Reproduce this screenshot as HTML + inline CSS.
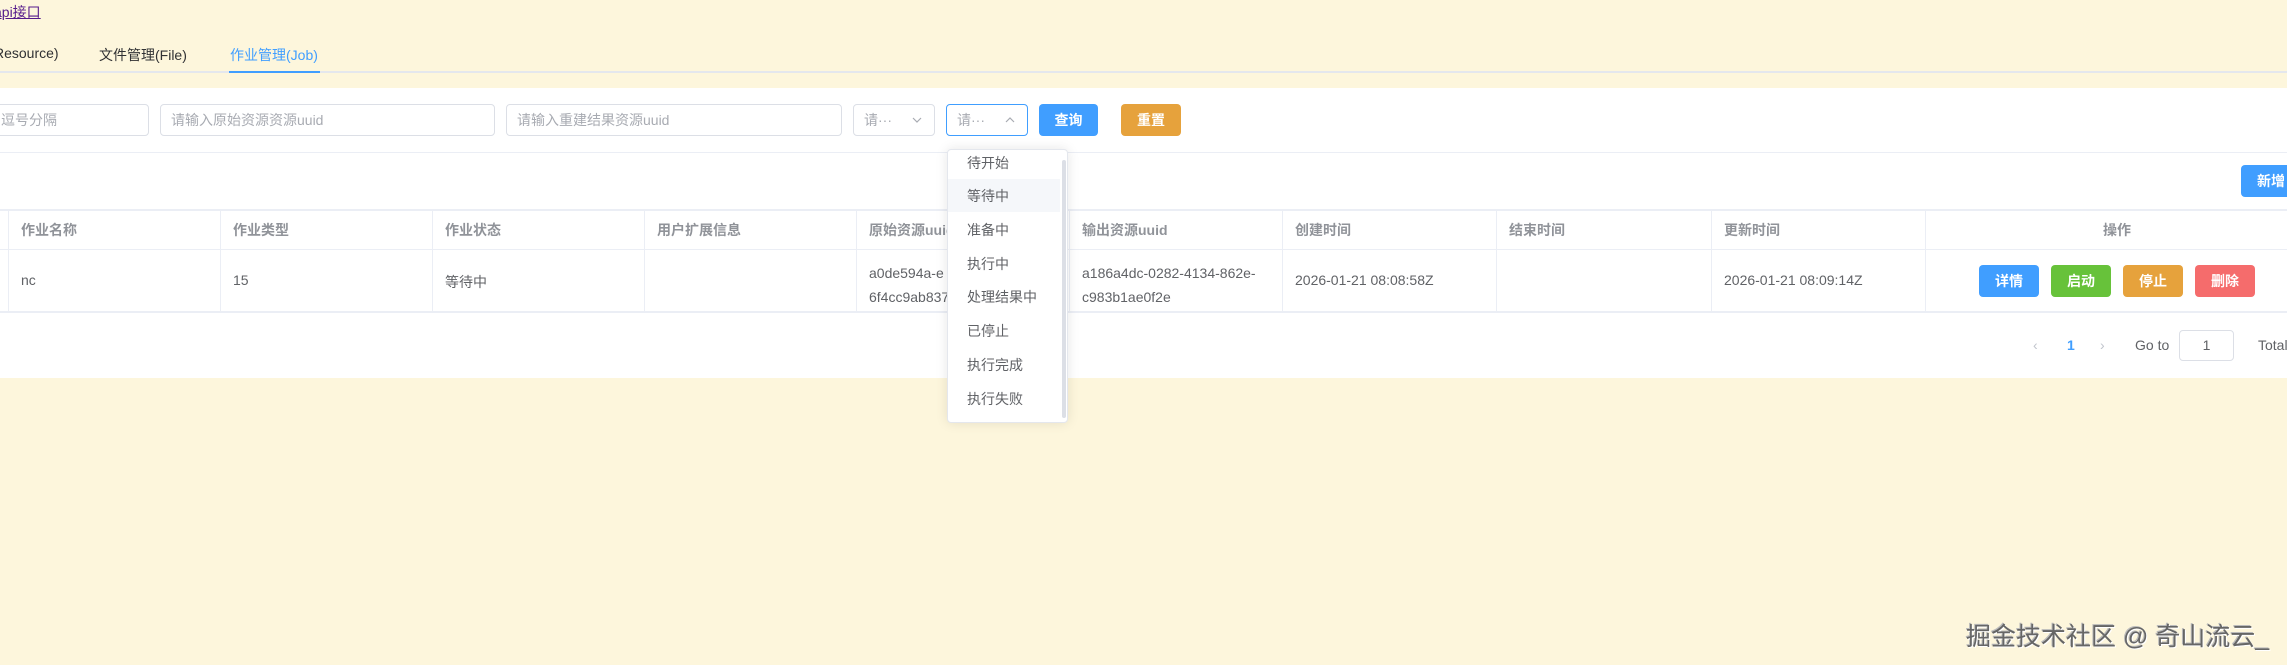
<!DOCTYPE html>
<html><head><meta charset="utf-8"><style>
*{box-sizing:border-box;margin:0;padding:0}
body{width:2287px;height:665px;overflow:hidden;background:#fdf6dc;font-family:"Liberation Sans","Noto Sans CJK SC",sans-serif;font-size:14px;color:#606266;position:relative}
.a{position:absolute}
.inp{position:absolute;top:104px;height:32px;border:1px solid #dcdfe6;border-radius:4px;background:#fff;color:#a8abb2;line-height:30px;padding-left:10px;font-size:14px;white-space:nowrap;overflow:hidden}
.btn{position:absolute;height:32px;border-radius:4px;color:#fff;text-align:center;line-height:32px;font-weight:bold;font-size:14px}
.vl{position:absolute;top:210px;height:102px;width:1px;background:#ebeef5}
.th{position:absolute;top:220px;font-weight:bold;color:#909399}
.td{position:absolute;color:#606266}
.it{position:absolute;left:967px;color:#606266;font-size:14px}
</style></head><body>
<a class="a" style="left:-6px;top:2px;color:#551a8b;text-decoration:underline;font-size:14px">api接口</a>
<div class="a" style="left:-6px;top:45px;color:#303133">Resource)</div>
<div class="a" style="left:99px;top:45px;color:#303133">文件管理(File)</div>
<div class="a" style="left:230px;top:45px;color:#409eff">作业管理(Job)</div>
<div class="a" style="left:0;top:71px;width:2287px;height:2px;background:#e4e7ed"></div>
<div class="a" style="left:229px;top:71px;width:91px;height:2px;background:#409eff"></div>
<div class="a" style="left:0;top:88px;width:2287px;height:290px;background:#fff"></div>
<div class="inp" style="left:-10px;width:159px;padding-left:10px">逗号分隔</div>
<div class="inp" style="left:160px;width:335px">请输入原始资源资源uuid</div>
<div class="inp" style="left:506px;width:336px">请输入重建结果资源uuid</div>
<div class="inp" style="left:853px;width:82px">请···<svg style="position:absolute;right:12px;top:12px" width="10" height="6" viewBox="0 0 10 6"><path d="M1 1l4 4 4-4" fill="none" stroke="#a8abb2" stroke-width="1.2"/></svg></div>
<div class="inp" style="left:946px;width:82px;border-color:#409eff">请···<svg style="position:absolute;right:12px;top:12px" width="10" height="6" viewBox="0 0 10 6"><path d="M1 5l4-4 4 4" fill="none" stroke="#a8abb2" stroke-width="1.2"/></svg></div>
<div class="btn" style="left:1039px;top:104px;width:59px;background:#409eff">查询</div>
<div class="btn" style="left:1121px;top:104px;width:60px;background:#e6a23c">重置</div>
<div class="a" style="left:0;top:152px;width:2287px;height:1px;background:#ebeef5"></div>
<div class="btn" style="left:2241px;top:165px;width:60px;background:#409eff">新增</div>
<div class="a" style="left:0;top:209px;width:2287px;height:2px;background:#ebeef5"></div>
<div class="a" style="left:0;top:249px;width:2287px;height:1px;background:#ebeef5"></div>
<div class="a" style="left:0;top:311px;width:2287px;height:2px;background:#ebeef5"></div>
<div class="vl" style="left:8px"></div><div class="vl" style="left:220px"></div><div class="vl" style="left:432px"></div><div class="vl" style="left:644px"></div><div class="vl" style="left:856px"></div><div class="vl" style="left:1069px"></div><div class="vl" style="left:1282px"></div><div class="vl" style="left:1496px"></div><div class="vl" style="left:1711px"></div><div class="vl" style="left:1925px"></div>
<div class="th" style="left:21px">作业名称</div>
<div class="th" style="left:233px">作业类型</div>
<div class="th" style="left:445px">作业状态</div>
<div class="th" style="left:657px">用户扩展信息</div>
<div class="th" style="left:869px">原始资源uuid</div>
<div class="th" style="left:1082px">输出资源uuid</div>
<div class="th" style="left:1295px">创建时间</div>
<div class="th" style="left:1509px">结束时间</div>
<div class="th" style="left:1724px">更新时间</div>
<div class="th" style="left:2103px">操作</div>
<div class="td" style="left:21px;top:272px">nc</div>
<div class="td" style="left:233px;top:272px">15</div>
<div class="td" style="left:445px;top:272px">等待中</div>
<div class="td" style="left:869px;top:261px;line-height:24px;width:200px;overflow:hidden">a0de594a-e<br>6f4cc9ab837</div>
<div class="td" style="left:1082px;top:261px;line-height:24px">a186a4dc-0282-4134-862e-<br>c983b1ae0f2e</div>
<div class="td" style="left:1295px;top:272px">2026-01-21 08:08:58Z</div>
<div class="td" style="left:1724px;top:272px">2026-01-21 08:09:14Z</div>
<div class="btn" style="left:1979px;top:265px;width:60px;background:#409eff">详情</div>
<div class="btn" style="left:2051px;top:265px;width:60px;background:#67c23a">启动</div>
<div class="btn" style="left:2123px;top:265px;width:60px;background:#e6a23c">停止</div>
<div class="btn" style="left:2195px;top:265px;width:60px;background:#f56c6c">删除</div>
<div class="a" style="left:2033px;top:337px;color:#c0c4cc">‹</div>
<div class="a" style="left:2067px;top:337px;color:#409eff;font-weight:bold">1</div>
<div class="a" style="left:2100px;top:337px;color:#c0c4cc">›</div>
<div class="a" style="left:2135px;top:337px">Go to</div>
<div class="a" style="left:2179px;top:330px;width:55px;height:31px;border:1px solid #dcdfe6;border-radius:4px;text-align:center;line-height:29px">1</div>
<div class="a" style="left:2258px;top:337px">Total</div>
<div class="a" style="left:947px;top:149px;width:121px;height:274px;background:#fff;border:1px solid #e4e7ed;border-radius:4px;box-shadow:0 0 12px rgba(0,0,0,.1)"></div>
<div class="a" style="left:948px;top:179px;width:112px;height:33px;background:#f5f7fa"></div>
<div class="a" style="left:1062px;top:160px;width:4px;height:258px;background:#dcdfe6;border-radius:2px"></div>
<div class="it" style="top:153px">待开始</div>
<div class="it" style="top:186px">等待中</div>
<div class="it" style="top:220px">准备中</div>
<div class="it" style="top:254px">执行中</div>
<div class="it" style="top:287px">处理结果中</div>
<div class="it" style="top:321px">已停止</div>
<div class="it" style="top:355px">执行完成</div>
<div class="it" style="top:389px">执行失败</div>
<div class="a" style="left:1966px;top:617px;font-size:25px;color:#666;text-shadow:1px 1px 0 #fff,-1px -1px 0 #bbb;white-space:nowrap">掘金技术社区 @ 奇山流云_</div>
</body></html>
